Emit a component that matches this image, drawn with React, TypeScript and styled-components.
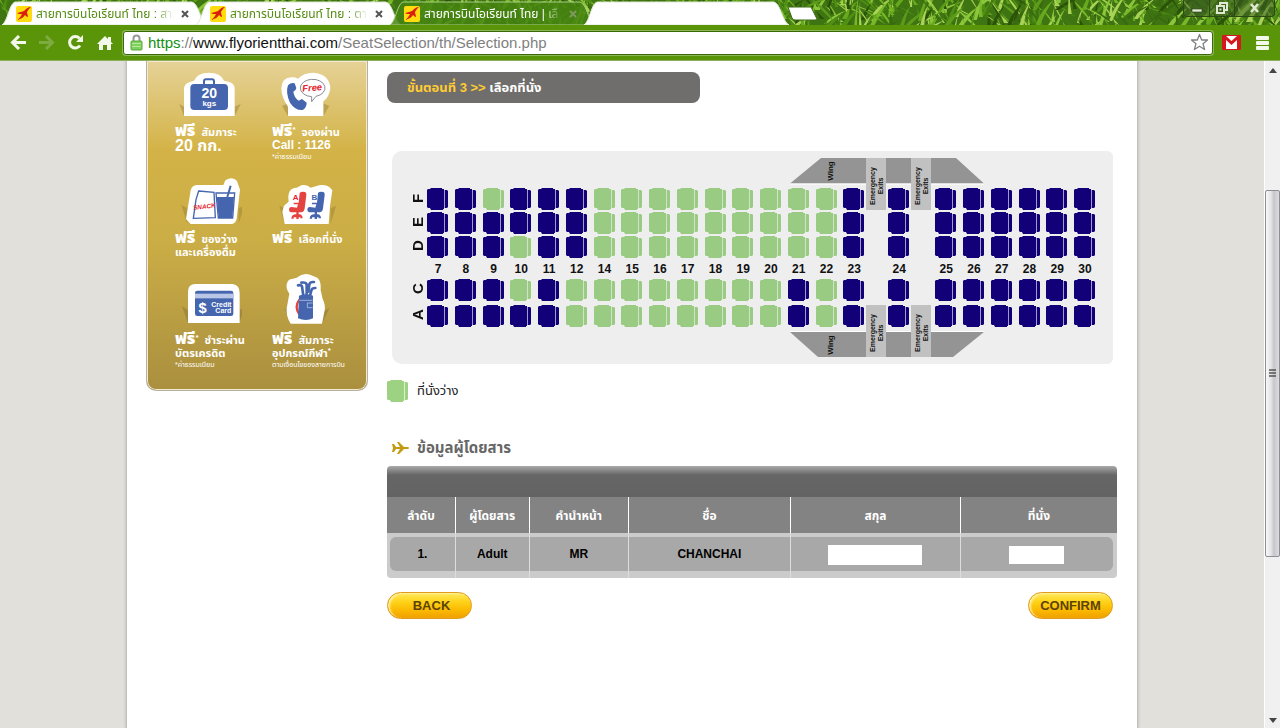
import React from "react";
import styled, { createGlobalStyle, css } from "styled-components";

const thai = `"Liberation Sans", "Noto Sans Thai", "Loma", "Garuda", sans-serif`;

const GlobalStyle = createGlobalStyle`
  *, *::before, *::after { box-sizing: border-box; }
  body { margin: 0; background: #e1e0db; font-family: ${thai}; font-size: 12px; color: #111; overflow: hidden; }
  button, input { font: inherit; }
`;

const Window = styled.div`
  display: flex;
  flex-direction: column;
  height: 100vh;
`;

/* ---------- browser frame ---------- */

const TabStrip = styled.header`
  position: relative;
  display: flex;
  align-items: flex-end;
  height: 25px;
  padding-left: 2px;
  background: #3f7412;
  overflow: hidden;
  flex: none;
`;

const Grass = styled.svg`
  position: absolute;
  inset: 0;
  width: 100%;
  height: 100%;
`;

const TabItem = styled.div<{ $active?: boolean }>`
  position: relative;
  display: flex;
  align-items: center;
  width: 205px;
  height: 24px;
  margin-right: -11px;
  padding: 2px 17px 0 14px;
  color: ${(p) => (p.$active ? "#fff" : "#558c12")};
`;

const TabShape = styled.svg`
  position: absolute;
  inset: 0;
  width: 100%;
  height: 100%;
`;

const TabLink = styled.a<{ $active?: boolean }>`
  position: relative;
  display: flex;
  align-items: center;
  flex: 1;
  min-width: 0;
  gap: 4px;
  color: inherit;
  text-decoration: none;
`;

const TabTitle = styled.span`
  flex: 1;
  min-width: 0;
  height: 20px;
  line-height: 20px;
  font-size: 12px;
  white-space: nowrap;
  mask-image: linear-gradient(90deg, #000 86%, transparent);
`;

const TabClose = styled.button<{ $active?: boolean }>`
  position: relative;
  display: flex;
  width: 10px;
  height: 10px;
  margin-left: 6px;
  padding: 1px;
  border: 0;
  background: none;
  color: ${(p) => (p.$active ? "#7d9a5c" : "#555")};
`;

const NewTab = styled.button`
  position: relative;
  width: 32px;
  height: 15px;
  margin: 0 0 4px 8px;
  padding: 0;
  border: 0;
  background: none;
`;

const WindowButtons = styled.div`
  position: relative;
  display: flex;
  align-self: flex-start;
  margin-left: auto;
  margin-right: 5px;
  border: 1px solid #2c4a14;
  border-top: 0;
  border-radius: 0 0 4px 4px;
  background: rgba(60, 90, 40, 0.5);
`;

const WindowButton = styled.button<{ $wide?: boolean }>`
  display: flex;
  align-items: center;
  justify-content: center;
  width: ${(p) => (p.$wide ? 40 : 25)}px;
  height: 16px;
  padding: 0;
  border: 0;
  background: none;
  & + & { border-left: 1px solid #2c4a14; }
`;

const Toolbar = styled.nav`
  display: flex;
  align-items: center;
  height: 36px;
  flex: none;
  padding: 0 2px 0 8px;
  background: #5a9409;
  border-bottom: 1px solid #8fae60;
`;

const ToolButton = styled.button`
  display: flex;
  align-items: center;
  justify-content: center;
  width: 29px;
  height: 24px;
  padding: 0;
  border: 0;
  background: none;
  flex: none;
  &:first-child { width: 20px; margin-right: 4px; }
  &:last-child { width: 32px; }
`;

const AddressBox = styled.div`
  display: flex;
  align-items: center;
  flex: 1;
  height: 24px;
  margin: 0 4px;
  padding: 0 3px 0 6px;
  border: 1px solid #3a6a06;
  border-radius: 3px;
  background: #fff;
  box-shadow: 0 0 0 1px #8db85a;
`;

const Address = styled.div`
  flex: 1;
  margin-left: 5px;
  font-family: "Liberation Sans", Arial, sans-serif;
  font-size: 15px;
  line-height: 20px;
  color: #808080;
  white-space: nowrap;
`;
const Scheme = styled.span`color: #129012;`;
const Host = styled.span`color: #111;`;

const Viewport = styled.div`
  display: flex;
  flex: 1;
  min-height: 0;
`;

const PageArea = styled.div`
  display: flex;
  justify-content: center;
  flex: 1;
  min-width: 0;
  overflow: hidden;
`;

const ScrollTrack = styled.div`
  display: flex;
  flex-direction: column;
  align-items: center;
  width: 16px;
  flex: none;
  padding: 7px 0 5px;
  background: #f0f0f0;
  border-left: 1px solid #fff;
`;

const ScrollThumb = styled.div`
  display: flex;
  align-items: center;
  justify-content: center;
  width: 15px;
  flex: 366 0 0;
  border: 1px solid #8d8d92;
  border-radius: 2px;
  background: linear-gradient(90deg, #f8f8f8, #e3e3e6 40%, #c6c6cc 60%, #dcdce0);
`;
const TrackGap = styled.div<{ $part: number }>`flex: ${(p) => p.$part} 0 0;`;

/* ---------- web page ---------- */

const Sheet = styled.div`
  display: flex;
  align-items: flex-start;
  gap: 19px;
  width: 100%;
  max-width: 1010px;
  padding: 0 20px 0 19px;
  background: #fff;
  box-shadow: 0 0 3px 1px #b0afab;
`;

const Benefits = styled.aside`
  display: grid;
  grid-template-columns: 97px 1fr;
  grid-template-rows: 107px 95px auto;
  width: 222px;
  flex: none;
  padding: 9px 0 20px 28px;
  border: 1px solid #b5b0a0;
  border-top: 0;
  border-radius: 0 0 10px 10px;
  box-shadow: inset 0 0 0 1px #f3ead0;
  background: linear-gradient(#e6d297, #d3b347 27%, #cbad46 55%, #aa8f3f);
`;

const Benefit = styled.figure`
  margin: 0;
  color: #fff;
  white-space: nowrap;
  svg { display: block; }
`;

const BenefitText = styled.figcaption`
  margin-top: 5px;
  font-weight: bold;
`;

const Line = styled.span<{ $kind?: "free" | "big" | "call" | "note" }>`
  display: block;
  height: 13px;
  line-height: 13px;
  font-size: 11px;
  ${(p) => p.$kind === "free" && css`height: 16px; line-height: 16px;`}
  ${(p) => p.$kind === "big" && css`font-size: 16px;`}
  ${(p) => p.$kind === "call" && css`font-size: 12px;`}
  ${(p) => p.$kind === "note" && css`height: 10px; line-height: 10px; font-size: 7px; font-weight: normal;`}
`;
const Free = styled.b`
  margin-right: 6px;
  font-size: 16px;
`;
const Star = styled.span`
  font-size: 8px;
  vertical-align: 4px;
  line-height: 8px;
`;

const Content = styled.main`
  flex: 1;
  min-width: 0;
  padding-top: 11px;
`;

const StepBar = styled.h1`
  width: 313px;
  height: 31px;
  margin: 0 0 48px;
  padding-left: 20px;
  border-radius: 8px;
  background: #706e6c;
  color: #fff;
  font-size: 13px;
  line-height: 31px;
`;
const StepNumber = styled.span`color: #ffcc33;`;

const Cabin = styled.section`
  position: relative;
  height: 213px;
  margin: 0 4px 0 5px;
  padding: 37px 17px 0 16px;
  border-radius: 10px 6px 6px 10px;
  background: #eee;
`;

const WingLayer = styled.svg`
  position: absolute;
  left: 398px;
  top: 0;
`;

const SeatGrid = styled.div`
  position: relative;
  display: grid;
  grid-template-columns: 19px repeat(15, 1fr) 45px 47px repeat(5, 1fr) 22px;
  grid-template-rows: 24px 24px 24px 19px 26px 24px;
`;

const RowLetter = styled.span`
  display: flex;
  align-items: center;
  justify-content: center;
  width: 20px;
  height: 20px;
  writing-mode: vertical-rl;
  transform: rotate(180deg);
  font-size: 15px;
  font-weight: bold;
  line-height: 20px;
`;

const Seat = styled.button<{ $free: boolean }>`
  display: block;
  width: 22px;
  height: 23px;
  padding: 0;
  border: 0;
  background: none;
  color: ${(p) => (p.$free ? "#99cc82" : "#120078")};
`;

const ColumnNumber = styled.span`
  width: 22px;
  font-size: 12px;
  font-weight: bold;
  line-height: 19px;
  text-align: center;
`;

const Legend = styled.p`
  display: flex;
  align-items: center;
  gap: 8px;
  height: 24px;
  margin: 15px 0 33px;
  color: #222;
  font-size: 13px;
`;
const LegendSeat = styled.span`
  display: flex;
  color: #9cd281;
`;

const SectionTitle = styled.h2`
  display: flex;
  align-items: center;
  gap: 7px;
  height: 24px;
  margin: 0 0 6px;
  padding-left: 5px;
  color: #666;
  font-size: 15px;
`;

const TableFrame = styled.div`
  border-radius: 4px;
  padding-top: 31px;
  background: linear-gradient(#aaa, #666 9px, #636363 31px, #cbcbcb 31px);
`;

const PassengerTable = styled.table`
  width: 100%;
  table-layout: fixed;
  border-collapse: separate;
  border-spacing: 0;
  font-size: 12px;
`;

const HeadCell = styled.th<{ $share?: number }>`
  width: ${(p) => (p.$share ? `${p.$share}%` : "auto")};
  height: 36px;
  padding: 2px 0 0;
  background: #838383;
  color: #fff;
  line-height: 20px;
  & + & { border-left: 1px solid #fff; }
`;

const DataCell = styled.td`
  padding: 4px 0 7px;
  & + & { border-left: 1px solid #ddd; }
  &:first-child { padding-left: 3px; }
  &:last-child { padding-right: 4px; }
`;
const CellFill = styled.div`
  display: flex;
  align-items: center;
  justify-content: center;
  height: 34px;
  background: #a8a8a8;
  font-weight: bold;
  color: #000;
  td:first-child > & { border-radius: 6px 0 0 6px; }
  td:last-child > & { border-radius: 0 6px 6px 0; }
`;
const Field = styled.input<{ $short?: boolean }>`
  width: ${(p) => (p.$short ? 55 : 94)}px;
  height: ${(p) => (p.$short ? 18 : 20)}px;
  margin-top: 2px;
  padding: 0 4px;
  border: 0;
  background: #fff;
`;

const Actions = styled.div`
  display: flex;
  justify-content: space-between;
  margin: 14px 4px 0 0;
`;
const Pill = styled.button`
  width: 85px;
  height: 27px;
  padding: 0 0 0 4px;
  border: 1px solid #e09a1c;
  border-radius: 14px;
  background: linear-gradient(#ffe95c, #ffd21a 35%, #fbb800 70%, #efa000);
  box-shadow: inset 2px 1px 2px #fff0a0;
  color: #5c4300;
  font-size: 13px;
  font-weight: bold;
  &:last-child { padding-left: 0; }
`;

/* ---------- drawings ---------- */

const blades = (() => {
  let seed = 11;
  const next = () => ((seed = (seed * 16807) % 2147483647) / 2147483647);
  const tones = ["#3a6a10", "#4f9014", "#78b828", "#8cc63a", "#447c10", "#a9d356", "#2a5209", "#66a81e", "#5d9c1a"];
  return Array.from({ length: 1000 }, () => {
    const x = next() * 1300 - 10;
    const y = next() * 40 + 2;
    const dx = (next() - 0.5) * 60;
    const h = 10 + next() * 24;
    const w = 2 + next() * 3;
    return {
      d: `M${x.toFixed(0)} ${y.toFixed(0)}q${(dx * 0.3).toFixed(1)} ${(-h * 0.6).toFixed(1)} ${dx.toFixed(1)} ${(-h).toFixed(1)}q${(-dx * 0.5).toFixed(1)} ${(h * 0.5).toFixed(1)} ${(-dx + w).toFixed(1)} ${h.toFixed(1)}z`,
      fill: tones[Math.floor(next() * tones.length)],
    };
  });
})();

const SeatShape = () => (
  <svg width="22" height="23" viewBox="0 0 22 23" fill="currentColor" aria-hidden="true">
    <path d="M0 2 1 1H3L4 0H15V1H17V21H16V22H4L3 20H1L0 19Z" />
    <path d="M18 2H20L21 3V19L20 20H18Z" />
    <path d="M17 2H18V20H17Z" opacity=".35" />
  </svg>
);

const Favicon = () => (
  <svg width="16" height="16" viewBox="0 0 16 16" aria-hidden="true">
    <rect width="16" height="16" rx="2" fill="#ffdc10" />
    <path d="M1 14C4 12 5 10 6 8C4 8 2 8 1 7C4 6 6 6 8 5C10 3 12 1 15 1C13 3 12 4 11 6C11 8 12 9 12 11C11 11 10 10 9 9C8 11 5 13 1 14Z" fill="#d8200c" />
  </svg>
);

const Cross = () => (
  <svg width="8" height="8" viewBox="0 0 8 8" aria-hidden="true">
    <path d="M1 1 7 7M7 1 1 7" stroke="currentColor" strokeWidth="2" />
  </svg>
);

const Outline = ({ d }: { d: string }) => <path d={d} fill="#fff" />;
const blue = "#4566ae";

const Suitcase = () => (
  <svg width="67" height="48" viewBox="105 30 201 144" aria-hidden="true">
    <path d="M118 132 132 140V168ZM302 132 284 140V168Z" fill="#9a8136" opacity=".5" />
    <Outline d="M132 168V88Q132 70 150 66L162 62Q172 38 207 38Q242 38 252 62L268 66Q284 70 284 88V168Z" />
    <path d="M192 72V64Q192 58 198 58H216Q222 58 222 64V72" fill="none" stroke={blue} strokeWidth="6" />
    <rect x="151" y="72" width="113" height="78" rx="12" fill={blue} />
    <text x="208" y="113" fontSize="42" fontWeight="bold" fill="#fff" textAnchor="middle">20</text>
    <text x="208" y="137" fontSize="24" fontWeight="bold" fill="#fff" textAnchor="middle">kgs</text>
  </svg>
);

const Phone = () => (
  <svg width="67" height="48" viewBox="396 30 201 144" aria-hidden="true">
    <path d="M426 138 444 130V168ZM568 138 550 130V168Z" fill="#9a8136" opacity=".5" />
    <Outline d="M444 168V140Q424 112 424 84Q426 50 458 52Q466 52 474 56Q490 38 520 38Q568 42 571 84Q568 112 550 124V168Z" />
    <path d="M444 76Q454 66 464 70L469 84Q468 92 460 95Q462 112 476 122L486 117 500 128Q500 142 488 150Q466 152 450 128Q436 98 444 76Z" fill={blue} />
    <path d="M481 84A37 26 0 1 1 528 109L515 125V110A37 26 0 0 1 481 84Z" fill="#fff" stroke="#8b8b93" strokeWidth="3" />
    <text x="517" y="93" fontSize="28" fontWeight="bold" fontStyle="italic" fill="#e2232c" textAnchor="middle" transform="rotate(-5 517 90)">Free</text>
  </svg>
);

const Snack = () => (
  <svg width="67" height="48" viewBox="105 352 201 144" aria-hidden="true">
    <path d="M124 436 142 446V492ZM314 436 296 446V492Z" fill="#9a8136" opacity=".5" />
    <Outline d="M152 493 138 478 152 392Q156 377 170 376H250L256 362Q278 348 291 364L300 390 290 478Q286 492 276 493Z" />
    <path d="M176 394 222 398 226 474 160 476 168 420Z" fill="#fff" stroke={blue} strokeWidth="4" />
    <path d="M228 400H284L278 475H235Z" fill="#fff" stroke={blue} strokeWidth="4" />
    <path d="M230 412H282L277 475H236Z" fill={blue} />
    <path d="M262 412 272 378" stroke={blue} strokeWidth="6" />
    <text x="193" y="447" fontSize="19" fontWeight="bold" fontStyle="italic" fill="#e2232c" textAnchor="middle" transform="rotate(-7 193 440)">SNACK</text>
  </svg>
);

const chair = "M32 2Q36-3 48-1Q53 1 52 8L47 48Q46 58 38 60H29V66H32Q40 67 41 78H34V75H29V80H22V75H14V79H7Q8 67 18 66H22V60H5Q-1 58 0 50Q2 43 8 44L24 46 27 36H14V31H29Z";
const Chairs = () => (
  <svg width="67" height="48" viewBox="396 352 201 144" aria-hidden="true">
    <path d="M418 438 434 446V492ZM588 438 572 446V492Z" fill="#9a8136" opacity=".5" />
    <Outline d="M434 493 427 456 432 438 446 426Q440 384 470 384L484 377Q502 374 512 384L540 376Q566 374 577 392L570 440 566 493Z" />
    <path d={chair} transform="translate(447 398)" fill="#e5433f" />
    <path d={chair} transform="translate(502 398)" fill={blue} />
    <text x="467" y="421" fontSize="24" fontWeight="bold" fill="#e2232c" textAnchor="middle">A</text>
    <text x="523" y="421" fontSize="24" fontWeight="bold" fill={blue} textAnchor="middle">B</text>
  </svg>
);

const CreditCard = () => (
  <svg width="67" height="54" viewBox="105 141 201 162" aria-hidden="true">
    <path d="M126 244 144 256V294ZM316 244 298 256V294Z" fill="#8a7434" opacity=".5" />
    <Outline d="M144 294V200Q144 177 166 177H278Q299 180 299 204V294Z" />
    <rect x="165" y="197" width="115" height="76" rx="7" fill={blue} />
    <rect x="165" y="206" width="115" height="14" fill="#b9c6e6" />
    <text x="188" y="263" fontSize="44" fontWeight="bold" fill="#fff" textAnchor="middle">$</text>
    <text x="244" y="245" fontSize="21" fontWeight="bold" fill="#fff" textAnchor="middle">Credit</text>
    <text x="250" y="263" fontSize="21" fontWeight="bold" fill="#fff" textAnchor="middle">Card</text>
  </svg>
);

const GolfBag = () => (
  <svg width="67" height="54" viewBox="396 141 201 162" aria-hidden="true">
    <path d="M434 250 452 262V296ZM568 250 546 262V296Z" fill="#8a7434" opacity=".5" />
    <Outline d="M452 296Q438 276 440 250L448 206Q438 194 440 178Q444 162 456 162L470 158Q490 142 512 150L532 158Q544 168 542 196L548 222Q557 240 554 256L546 296Z" />
    <path d="M478 224Q462 246 478 268" fill="none" stroke="#e5433f" strokeWidth="7" />
    <path d="M490 212 486 184Q484 179 474 181M500 212V178Q498 171 484 173M510 212 514 196Q516 189 526 189M505 200 508 178Q510 170 522 171" fill="none" stroke={blue} strokeWidth="8" strokeLinecap="round" strokeLinejoin="round" />
    <path d="M477 212Q498 204 519 212V280Q498 290 474 280Z" fill={blue} />
    <path d="M518 234H502V248H518M478 226H518" fill="none" stroke="#c9d4ee" strokeWidth="2" />
  </svg>
);

/* ---------- data ---------- */

const columns = [7, 8, 9, 10, 11, 12, 14, 15, 16, 17, 18, 19, 20, 21, 22, 23, 24, 25, 26, 27, 28, 29, 30];
const range = (a: number, b: number) => columns.filter((c) => c >= a && c <= b);
const freeSeats: Record<string, number[]> = {
  F: [9, ...range(14, 22)],
  E: range(14, 22),
  D: [10, ...range(14, 22)],
  C: [10, ...range(12, 20), 22],
  A: [...range(12, 20), 22],
};

const SeatRow = ({ letter }: { letter: string }) => (
  <>
    <RowLetter>{letter}</RowLetter>
    {columns.map((c) => (
      <Seat key={c} $free={freeSeats[letter].includes(c)} aria-label={`${c}${letter}`}>
        <SeatShape />
      </Seat>
    ))}
  </>
);

const tabs = [
  { title: "สายการบินโอเรียนท์ ไทย : สา" },
  { title: "สายการบินโอเรียนท์ ไทย : ตา" },
  { title: "สายการบินโอเรียนท์ ไทย | เลื", active: true },
];

const Tab = ({ title, active }: { title?: string; active?: boolean }) => (
  <TabItem $active={active}>
    <TabShape viewBox="0 0 205 24" preserveAspectRatio="none" aria-hidden="true">
      <path
        d="M0 24C6 20 7 3 13 1H190C197 3 198 20 205 24Z"
        fill={active ? "#458410" : "#fff"}
        fillOpacity={active ? 0.85 : 1}
        stroke={active ? "#a9cf83" : "#dfe8d5"}
      />
    </TabShape>
    {title && (
      <>
        <TabLink href="#">
          <Favicon />
          <TabTitle>{title}</TabTitle>
        </TabLink>
        <TabClose $active={active} aria-label="Close tab"><Cross /></TabClose>
      </>
    )}
  </TabItem>
);

const Exits = ({ x, y }: { x: number; y: number }) => (
  <g transform={`translate(${x} ${y})`}>
    <rect width="20" height="52" fill="#c1c1c1" />
    <g transform="translate(9 28) rotate(-90)" fontSize="7" fontWeight="bold" textAnchor="middle" fill="#111">
      <text y="0">Emergency</text>
      <text y="8">Exits</text>
    </g>
  </g>
);

export default function App() {
  return (
    <Window>
      <GlobalStyle />
      <TabStrip>
        <Grass viewBox="0 0 1280 25" preserveAspectRatio="xMidYMid slice" aria-hidden="true">
          {blades.map((b, i) => <path key={i} d={b.d} fill={b.fill} />)}
        </Grass>
        {tabs.map((t) => <Tab key={t.title} {...t} />)}
        <Tab />
        <NewTab aria-label="New tab">
          <svg width="32" height="15" viewBox="0 0 32 15" aria-hidden="true">
            <path d="M2 1H25L31 13Q31 14 29 14H9Q7 14 6 12Z" fill="#fff" stroke="#3e6a16" />
          </svg>
        </NewTab>
        <WindowButtons>
          <WindowButton aria-label="Minimize">
            <svg width="12" height="12" viewBox="0 0 12 12"><rect x="1" y="7" width="10" height="3" fill="#dfe8d0" stroke="#2b3a1c" strokeWidth=".6" /></svg>
          </WindowButton>
          <WindowButton aria-label="Restore">
            <svg width="12" height="12" viewBox="0 0 12 12" fill="none" stroke="#dfe8d0" strokeWidth="2"><path d="M4 3V1H11V8H9" /><rect x="1" y="4" width="7" height="7" /><rect x="4" y="7" width="1" height="1" strokeWidth="1" /></svg>
          </WindowButton>
          <WindowButton $wide aria-label="Close">
            <svg width="11" height="10" viewBox="0 0 11 10"><path d="M2 1 9 9M9 1 2 9" stroke="#dfe8d0" strokeWidth="2.6" /></svg>
          </WindowButton>
        </WindowButtons>
      </TabStrip>

      <Toolbar>
        <ToolButton aria-label="Back">
          <svg width="17" height="15" viewBox="0 0 17 15" fill="none" stroke="#f3f9ea" strokeWidth="3"><path d="M3 7.500H16M9 1 2.500 7.500 9 14" /></svg>
        </ToolButton>
        <ToolButton aria-label="Forward">
          <svg width="17" height="15" viewBox="0 0 17 15" fill="none" stroke="#7dab40" strokeWidth="3"><path d="M14 7.500H1M8 1 14.500 7.500 8 14" /></svg>
        </ToolButton>
        <ToolButton aria-label="Reload">
          <svg width="17" height="17" viewBox="0 0 17 17" fill="none" stroke="#f3f9ea" strokeWidth="3"><path d="M13 11.500A5.700 5.700 0 1 1 12.500 4.500" /><path d="M16 1V8H9Z" fill="#f3f9ea" stroke="none" /></svg>
        </ToolButton>
        <ToolButton aria-label="Home">
          <svg width="16" height="16" viewBox="0 0 16 16" fill="#f3f9ea"><path d="M8 1 0 9H2V15H6V10H10V15H14V9H16L14 7V2H11V4Z" /></svg>
        </ToolButton>
        <AddressBox>
          <svg width="13" height="17" viewBox="0 0 13 17" aria-hidden="true">
            <path d="M3.500 8V4.500A3 3 0 0 1 9.500 4.500V8" fill="none" stroke="#999" strokeWidth="2" />
            <rect x="1" y="7" width="11" height="9" rx="1" fill="#7fd05c" stroke="#55a83a" />
            <path d="M2 9.500H11M2 12.500H11" stroke="#b5e99a" />
          </svg>
          <Address>
            <Scheme>https</Scheme>://<Host>www.flyorientthai.com</Host>/SeatSelection/th/Selection.php
          </Address>
          <svg width="19" height="19" viewBox="0 0 19 19" aria-hidden="true">
            <path d="M9.500 1.500 11.700 7H17.500L13 10.700 14.600 16.500 9.500 13.200 4.400 16.500 6 10.700 1.500 7H7.300Z" fill="#fff" stroke="#808080" strokeWidth="1.300" strokeLinejoin="round" />
          </svg>
        </AddressBox>
        <ToolButton aria-label="Mail">
          <svg width="19" height="15" viewBox="0 0 19 15"><rect width="19" height="15" rx="1" fill="#d5181e" /><path d="M4 14V5L9.500 10 15 5V14Z" fill="#fff" /><path d="M4 1H15L9.500 6Z" fill="#fff" /></svg>
        </ToolButton>
        <ToolButton aria-label="Menu">
          <svg width="13" height="14" viewBox="0 0 13 14" fill="#f3f9ea"><rect width="13" height="4" rx="1" /><rect y="5" width="13" height="4" rx="1" /><rect y="10" width="13" height="4" rx="1" /></svg>
        </ToolButton>
      </Toolbar>

      <Viewport>
        <PageArea>
          <Sheet>
            <Benefits>
              <Benefit>
                <Suitcase />
                <BenefitText>
                  <Line $kind="free"><Free>ฟรี</Free>สัมภาระ</Line>
                  <Line $kind="big">20 กก.</Line>
                </BenefitText>
              </Benefit>
              <Benefit>
                <Phone />
                <BenefitText>
                  <Line $kind="free"><Free>ฟรี<Star>*</Star></Free>จองผ่าน</Line>
                  <Line $kind="call">Call : 1126</Line>
                  <Line $kind="note">*ค่าธรรมเนียม</Line>
                </BenefitText>
              </Benefit>
              <Benefit>
                <Snack />
                <BenefitText>
                  <Line $kind="free"><Free>ฟรี</Free>ของว่าง</Line>
                  <Line>และเครื่องดื่ม</Line>
                </BenefitText>
              </Benefit>
              <Benefit>
                <Chairs />
                <BenefitText>
                  <Line $kind="free"><Free>ฟรี</Free>เลือกที่นั่ง</Line>
                </BenefitText>
              </Benefit>
              <Benefit>
                <CreditCard />
                <BenefitText>
                  <Line $kind="free"><Free>ฟรี<Star>*</Star></Free>ชำระผ่าน</Line>
                  <Line>บัตรเครดิต</Line>
                  <Line $kind="note">*ค่าธรรมเนียม</Line>
                </BenefitText>
              </Benefit>
              <Benefit>
                <GolfBag />
                <BenefitText>
                  <Line $kind="free"><Free>ฟรี</Free>สัมภาระ</Line>
                  <Line>อุปกรณ์กีฬา<Star>*</Star></Line>
                  <Line $kind="note">ตามเงื่อนไขของสายการบิน</Line>
                </BenefitText>
              </Benefit>
            </Benefits>

            <Content>
              <StepBar><StepNumber>ขั้นตอนที่ 3 &gt;&gt;</StepNumber> เลือกที่นั่ง</StepBar>

              <Cabin>
                <WingLayer width="196" height="213" viewBox="0 0 196 213" aria-hidden="true">
                  <path d="M0 32.500 31 7H166L194 32.500Z" fill="#949494" />
                  <path d="M0 181H194L163 206H28Z" fill="#949494" />
                  <path d="M0 33H194M0 180.500H194" stroke="#fff" />
                  <Exits x={76} y={7} />
                  <Exits x={121} y={7} />
                  <Exits x={76} y={154} />
                  <Exits x={121} y={154} />
                  <g fontSize="8" fontWeight="bold" fill="#111" textAnchor="middle">
                    <text transform="translate(43 20) rotate(-90)">Wing</text>
                    <text transform="translate(43 194) rotate(-90)">Wing</text>
                  </g>
                </WingLayer>
                <SeatGrid>
                  <SeatRow letter="F" />
                  <SeatRow letter="E" />
                  <SeatRow letter="D" />
                  <span />
                  {columns.map((c) => <ColumnNumber key={c}>{c}</ColumnNumber>)}
                  <SeatRow letter="C" />
                  <SeatRow letter="A" />
                </SeatGrid>
              </Cabin>

              <Legend><LegendSeat><SeatShape /></LegendSeat>ที่นั่งว่าง</Legend>

              <SectionTitle>
                <svg width="18" height="14" viewBox="0 0 18 14" aria-hidden="true">
                  <path d="M0 3H2L4 6H8L5 1H7L12 6H16Q18 7 16 8H12L7 13H5L8 8H4L2 11H0L1 7Z" fill="#c49a10" />
                </svg>
                ข้อมูลผู้โดยสาร
              </SectionTitle>

              <TableFrame>
                <PassengerTable>
                  <thead>
                    <tr>
                      <HeadCell $share={9.3}>ลำดับ</HeadCell>
                      <HeadCell $share={10.1}>ผู้โดยสาร</HeadCell>
                      <HeadCell $share={13.6}>คำนำหน้า</HeadCell>
                      <HeadCell $share={22.2}>ชื่อ</HeadCell>
                      <HeadCell $share={23.3}>สกุล</HeadCell>
                      <HeadCell>ที่นั่ง</HeadCell>
                    </tr>
                  </thead>
                  <tbody>
                    <tr>
                      <DataCell><CellFill>1.</CellFill></DataCell>
                      <DataCell><CellFill>Adult</CellFill></DataCell>
                      <DataCell><CellFill>MR</CellFill></DataCell>
                      <DataCell><CellFill>CHANCHAI</CellFill></DataCell>
                      <DataCell><CellFill><Field aria-label="สกุล" /></CellFill></DataCell>
                      <DataCell><CellFill><Field $short aria-label="ที่นั่ง" /></CellFill></DataCell>
                    </tr>
                  </tbody>
                </PassengerTable>
              </TableFrame>

              <Actions>
                <Pill>BACK</Pill>
                <Pill>CONFIRM</Pill>
              </Actions>
            </Content>
          </Sheet>
        </PageArea>
        <ScrollTrack aria-hidden="true">
          <svg width="8" height="5" viewBox="0 0 8 5"><path d="M4 0 8 5H0Z" fill="#444" /></svg>
          <TrackGap $part={117} />
          <ScrollThumb>
            <svg width="8" height="9" viewBox="0 0 8 9"><path d="M0 1H7M0 4H7M0 7H7" stroke="#555" strokeWidth="1.500" /></svg>
          </ScrollThumb>
          <TrackGap $part={162} />
          <svg width="8" height="5" viewBox="0 0 8 5"><path d="M0 0H8L4 5Z" fill="#444" /></svg>
        </ScrollTrack>
      </Viewport>
    </Window>
  );
}
